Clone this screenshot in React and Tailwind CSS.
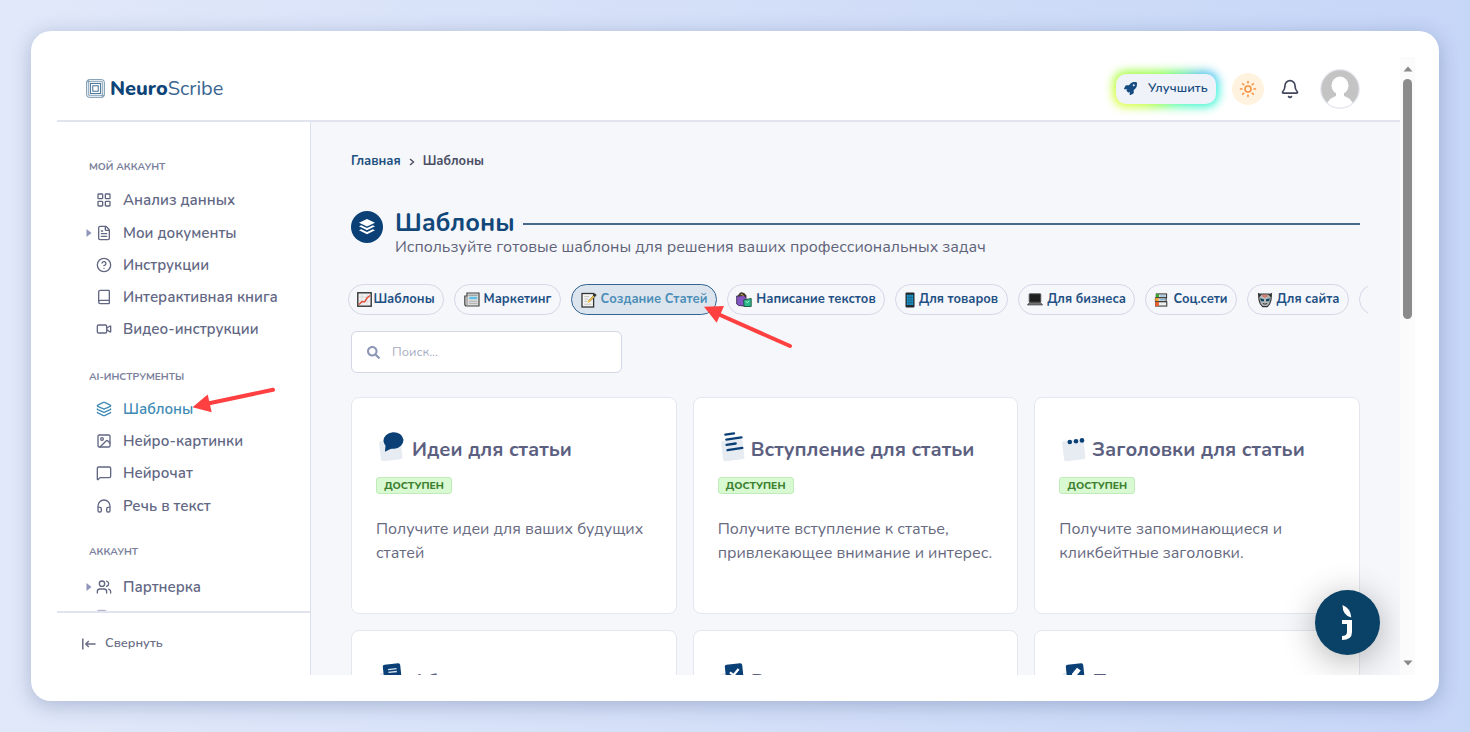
import React from "react";
import { LayoutGrid, FileText, CircleHelp, Book, Video, Layers, Image as ImageIcon, MessageSquare, Headphones, Users, Sun, Bell } from "lucide-react";
import { FaSearch, FaRocket } from "react-icons/fa";

const cap = "font-bold text-[10.2px] leading-none text-[#7b819c]";

function Caret() {
  return (
    <svg className="h-2 w-[6px]" viewBox="0 0 6 8">
      <path d="M0.5 0 L5.5 4 L0.5 8Z" fill="#8f96b8" />
    </svg>
  );
}

function NavItem({ icon: Icon, label, height, caret, active }) {
  return (
    <div className={`flex shrink-0 items-center pl-[29px] ${height} ${active ? "text-[#3f8bb5]" : "text-[#626784]"}`}>
      <div className="flex w-[10px] items-center">{caret && <Caret />}</div>
      <Icon size={16} strokeWidth={2} />
      <span className="ml-[11px] whitespace-nowrap text-[15px] font-semibold leading-5">{label}</span>
    </div>
  );
}

function Logo() {
  return (
    <svg className="h-[19px] w-[19px]" viewBox="0 0 19 19" fill="none" stroke="#7596b0" strokeWidth="0.9">
      <rect x="0.7" y="0.7" width="17.6" height="17.6" rx="2.5" stroke="#5c83a2" />
      <path d="M2.7 0.7V16.3H18.3M0.7 2.7H16.3V18.3" />
      <path d="M4.5 4.5H14.5V14.5H4.5Z" stroke="#4f7b9d" strokeWidth="1.1" />
      <rect x="6.8" y="6.8" width="5.4" height="5.4" stroke="#2f6088" fill="#fff" />
    </svg>
  );
}

const ChartIcon = () => (
  <svg className="h-[15px] w-[15px]" viewBox="0 0 15 15">
    <rect x="0.8" y="0.8" width="13.4" height="13.4" fill="#f1f1f1" stroke="#333" strokeWidth="1.4" />
    <path d="M1.5 5h12M1.5 9h12M5 1.5v12M10 1.5v12" stroke="#d0d0d0" strokeWidth="0.7" />
    <path d="M2 12.5L5 9.5L7.5 10L10 6L13 3.5" fill="none" stroke="#e2513f" strokeWidth="1.5" />
  </svg>
);
const NewsIcon = () => (
  <svg className="h-[15px] w-[16px]" viewBox="0 0 16 15">
    <path d="M3 1H15V14H2.5Q0.8 14 0.8 12V4H3Z" fill="#dcdcdc" stroke="#444" strokeWidth="1.2" />
    <path d="M3 4V13" stroke="#888" />
    <path d="M4.5 3.2H13.5" stroke="#8a8a8a" />
    <rect x="5.3" y="4.8" width="7.8" height="2.4" fill="#5bc0e6" />
    <path d="M5 9.3H13.3M5 11.4H13.3" stroke="#a8a8a8" strokeWidth="0.8" />
  </svg>
);
const MemoIcon = () => (
  <svg className="h-[16px] w-[16px]" viewBox="0 0 16 16">
    <rect x="1" y="1.5" width="11.6" height="13.5" fill="#f5f5f3" stroke="#333" strokeWidth="1.3" />
    <path d="M3.3 4.6h5M3.3 7h4M3.3 9.4h3M3.3 12.2h7" stroke="#b5b5b5" strokeWidth="0.8" />
    <path d="M7.8 9.6L14 3" stroke="#555" strokeWidth="2" />
    <path d="M7 10.4L13 4" stroke="#f3c64b" strokeWidth="1.6" />
    <path d="M12.9 4.1L14.7 2.2" stroke="#333" strokeWidth="2.6" />
  </svg>
);
const BagsIcon = () => (
  <svg className="h-[16px] w-[16px]" viewBox="0 0 16 16">
    <path d="M0.7 4L10 3.3V14.3L2.5 13.4L0.7 12Z" fill="#8655c5" stroke="#3a2c50" strokeWidth="0.9" />
    <path d="M2.6 4.6Q4 0.2 6.4 1.2Q9 1.6 9.4 4.8M4.6 4Q5.4 1 8 3.6" fill="none" stroke="#3b3426" strokeWidth="1.5" />
    <path d="M5 2.6Q6.5 1.6 7.4 4" fill="none" stroke="#d8b24a" strokeWidth="0.9" />
    <path d="M7.6 8L15.2 6.5V14.5H8Z" fill="#2bb98a" stroke="#15543f" strokeWidth="0.9" />
    <path d="M9.6 9.3Q11.5 12 13.2 8.8" fill="none" stroke="#c9f5e2" strokeWidth="0.9" />
  </svg>
);
const PhoneIcon = () => (
  <svg className="h-[16px] w-[10px]" viewBox="0 0 10 16">
    <rect x="0.5" y="0.5" width="9" height="15" rx="1" fill="#25292e" />
    <rect x="1.8" y="2.8" width="6.4" height="10.2" fill="#159bd3" />
    <path d="M3.9 3v10M6.1 3v10M1.9 5.4h6.2M1.9 8h6.2M1.9 10.6h6.2" stroke="#25506b" strokeWidth="0.6" />
  </svg>
);
const LaptopIcon = () => (
  <svg className="h-[15px] w-[16px]" viewBox="0 0 16 15">
    <rect x="2.2" y="1.8" width="11.6" height="8.4" rx="0.6" fill="#1e1e1e" stroke="#555" strokeWidth="0.9" />
    <path d="M2.4 10.6H13.6L15.6 13H0.4Z" fill="#777" stroke="#333" strokeWidth="0.6" />
  </svg>
);
const BooksIcon = () => (
  <svg className="h-[14px] w-[14px]" viewBox="0 0 14 15">
    <rect x="2" y="1" width="11" height="4" fill="#eee" stroke="#333" strokeWidth="1.1" />
    <rect x="1.5" y="1" width="3.5" height="4" fill="#3fa535" />
    <rect x="1" y="5.2" width="11.5" height="3.8" fill="#eee" stroke="#333" strokeWidth="1.1" />
    <rect x="0.8" y="5.4" width="3.5" height="3.6" fill="#f2a331" />
    <rect x="1.2" y="9.4" width="12" height="4.6" fill="#eee" stroke="#333" strokeWidth="1.1" />
    <rect x="0.8" y="9.6" width="4" height="4.4" fill="#e8622f" />
    <path d="M6 3.2H12M5.5 7.2H11.5" stroke="#4a9ed6" strokeWidth="0.9" />
  </svg>
);
const MaskIcon = () => (
  <svg className="h-[16px] w-[16px]" viewBox="0 0 16 16">
    <path d="M1.6 2.5L4.5 2H11.5L14.4 2.5L14 8L12.6 12L10.3 14.6H5.7L3.4 12L2 8Z" fill="#b4b8ba" stroke="#333" strokeWidth="1.1" strokeLinejoin="round" />
    <path d="M0.8 0.8L4.8 2.4L2 5.5ZM15.2 0.8L11.2 2.4L14 5.5Z" fill="#333" />
    <path d="M3 6.3L7 7.2V9.2H4ZM13 6.3L9 7.2V9.2H12Z" fill="#0f4860" />
    <path d="M8 2.4V5.8M6 2.8L6.4 4.8M10 2.8L9.6 4.8" stroke="#e4573d" strokeWidth="1.1" />
    <path d="M5.8 11.5Q8 12.8 10.2 11.5" fill="none" stroke="#333" />
  </svg>
);

const tabs = [
  { t: "Шаблоны", I: ChartIcon, w: "w-24", g: "gap-px" },
  { t: "Маркетинг", I: NewsIcon, w: "w-[107px]", g: "gap-1" },
  { t: "Создание Статей", I: MemoIcon, w: "w-[146px]", g: "gap-1", on: true },
  { t: "Написание текстов", I: BagsIcon, w: "w-[158px]", g: "gap-1" },
  { t: "Для товаров", I: PhoneIcon, w: "w-[113px]", g: "gap-1" },
  { t: "Для бизнеса", I: LaptopIcon, w: "w-[117px]", g: "gap-1" },
  { t: "Соц.сети", I: BooksIcon, w: "w-[92px]", g: "gap-[5px]" },
  { t: "Для сайта", I: MaskIcon, w: "w-[102px]", g: "gap-1" },
];

function CardIcon({ kind }) {
  return (
    <svg className="-mt-[5px] h-8 w-7 shrink-0" viewBox="0 0 28 32">
      <rect x="4" y="9" width="21.5" height="20.5" rx="2.5" fill="#e7ecf3" transform="rotate(-7 14 19)" />
      {kind === "comment" && (
        <g transform="rotate(-5 17 10)">
          <ellipse cx="17.5" cy="9.5" rx="10" ry="8.3" fill="#0b4076" />
          <path d="M9.5 12L8 20L16 17Z" fill="#0b4076" />
        </g>
      )}
      {kind === "lines" && (
        <g stroke="#0b4076" strokeWidth="2.3" strokeLinecap="round" transform="translate(-1 0)">
          <path d="M8.3 3.6L17 2.4M9.3 8.7L24.5 6.4M9.5 13.8L18.7 12.5M10.5 19.2L25.3 16.9" />
        </g>
      )}
      {kind === "dots" && (
        <g fill="#0b4076">
          <circle cx="10.8" cy="11" r="2.3" />
          <circle cx="17" cy="10.2" r="2.3" />
          <circle cx="23" cy="9.4" r="2.3" />
        </g>
      )}
      {(kind === "doc" || kind === "check" || kind === "pen") && (
        <g transform="rotate(-6 16 10)">
          <rect x="7.5" y="0.9" width="17.5" height="19" rx="2" fill="#0b4076" />
          {kind === "doc" && <path d="M12.5 6.2H21M12.5 9H21" stroke="#dce5ef" strokeWidth="1.3" />}
          {kind === "check" && <path d="M12 9L15.5 12L21 6.5" fill="none" stroke="#fff" strokeWidth="2.2" />}
          {kind === "pen" && <path d="M12 15L13 10.5L18.5 5L22 8L16 14Z" fill="#fff" />}
        </g>
      )}
    </svg>
  );
}

function Card({ kind, title, tight, raised, lines }) {
  return (
    <div className={`h-[217px] rounded-lg border border-[#e5e7f0] bg-white px-6 ${raised ? "pt-[30px]" : "pt-[31px]"}`}>
      <div className={`flex h-10 items-center ${tight ? "gap-[5px]" : "gap-2"}`}>
        <CardIcon kind={kind} />
        <h3 className="whitespace-nowrap pt-px text-xl font-bold leading-6 text-[#5c6080]">{title}</h3>
      </div>
      <div className="mt-2 flex h-[17px] w-[76px] items-center justify-center rounded-[3px] border border-[#c0ecb9] bg-[#d9f9d3] pt-px text-[10.4px] font-extrabold leading-none text-[#3d8030]">
        ДОСТУПЕН
      </div>
      <div className="mt-[23px]">
        {lines.map((text) => (
          <p key={text} className="whitespace-nowrap text-base leading-6 text-[#66697f]">{text}</p>
        ))}
      </div>
    </div>
  );
}

function Sidebar() {
  return (
    <aside className="flex w-[254px] shrink-0 flex-col border-r border-[#dcdfec] bg-white">
      <nav className="flex h-[489px] flex-col overflow-hidden pt-[39px]">
        <div className={`flex h-3 shrink-0 items-center pl-8 ${cap}`}>МОЙ АККАУНТ</div>
        <div className="h-[10px] shrink-0" />
        <NavItem icon={LayoutGrid} label="Анализ данных" height="h-[34px]" />
        <NavItem icon={FileText} label="Мои документы" height="h-[32px]" caret />
        <NavItem icon={CircleHelp} label="Инструкции" height="h-[32px]" />
        <NavItem icon={Book} label="Интерактивная книга" height="h-[32px]" />
        <NavItem icon={Video} label="Видео-инструкции" height="h-[32px]" />
        <div className="h-[26px] shrink-0" />
        <div className={`flex h-3 shrink-0 items-center pl-8 ${cap}`}>AI-ИНСТРУМЕНТЫ</div>
        <div className="h-[10px] shrink-0" />
        <NavItem icon={Layers} label="Шаблоны" height="h-[32px]" active />
        <NavItem icon={ImageIcon} label="Нейро-картинки" height="h-[32px]" />
        <NavItem icon={MessageSquare} label="Нейрочат" height="h-[32px]" />
        <NavItem icon={Headphones} label="Речь в текст" height="h-[33px]" />
        <div className="h-[24px] shrink-0" />
        <div className={`flex h-3 shrink-0 items-center pl-8 ${cap}`}>АККАУНТ</div>
        <div className="h-[12px] shrink-0" />
        <NavItem icon={Users} label="Партнерка" height="h-[33px]" caret />
        <FileText className="ml-[38px] mt-[6px] shrink-0 text-[#b5b9cb]" size={16} />
      </nav>
      <div className="flex h-[64px] items-center border-t-2 border-[#e1e4ee] pl-[25px] text-[#6a6e86]">
        <svg className="h-3 w-[14px]" viewBox="0 0 14 12" fill="none" stroke="#6a6e86" strokeWidth="1.5">
          <path d="M0.8 0.5V11.5M3.7 6H13.6M6.8 3L3.8 6L6.8 9" />
        </svg>
        <span className="ml-[9px] text-[12.8px] font-semibold">Свернуть</span>
      </div>
    </aside>
  );
}

export default function App() {
  return (
    <div className="relative h-[732px] w-[1470px] overflow-hidden bg-linear-to-r from-[#e1e8f9] to-[#c6d6f7] p-[31px] font-['Nunito','Open_Sans',sans-serif]">
      <div className="h-[670px] w-[1408px] rounded-[20px] bg-white p-[26px] shadow-[0_4px_20px_rgba(60,80,130,0.32)]">
        <div className="flex h-[618px] w-[1358px]">
          <div className="flex w-[1343px] flex-col">
            <header className="flex h-[65px] shrink-0 items-center border-b-2 border-[#e1e4ee] pl-[29px]">
              <Logo />
              <div className="ml-[5px] text-xl leading-none text-[#3a6691]">
                <b className="font-extrabold text-[#0d4478]">Neuro</b>Scribe
              </div>
              <div className="ml-auto flex items-center pr-10">
                <div className="relative h-[30px] w-[100px]">
                  <div className="absolute -inset-[3px] rounded-[13px] bg-[conic-gradient(from_0deg,#7dff4a,#5cf08a_52deg,#4cb8f5_72deg,#3df5e0_90deg,#3df5d0_108deg,#5cffa0_150deg,#8dff4a_210deg,#dcff3a_255deg,#c8ff3a_270deg,#9dff3a_290deg,#7dff4a)] blur-[5px]" />
                  <div className="relative flex h-full items-center rounded-[10px] bg-[#eff2f8] pl-2 text-[#154b80]">
                    <FaRocket size={13} />
                    <span className="ml-[11px] pt-px text-[12.8px] font-semibold">Улучшить</span>
                  </div>
                </div>
                <div className="ml-4 flex h-8 w-8 items-center justify-center rounded-full bg-[#fff2df] text-[#f59140]">
                  <Sun size={18} strokeWidth={2.1} />
                </div>
                <Bell className="ml-4 text-[#43475e]" size={20} strokeWidth={2} />
                <svg className="ml-5 h-10 w-10" viewBox="0 0 40 40">
                  <defs><clipPath id="av"><circle cx="20" cy="20" r="18.8" /></clipPath></defs>
                  <circle cx="20" cy="20" r="19.3" fill="#c4c4c4" stroke="#e8eaf2" strokeWidth="1.3" />
                  <g clipPath="url(#av)" fill="#fff">
                    <ellipse cx="20" cy="16.5" rx="8.5" ry="9" />
                    <rect x="16" y="21" width="8" height="8" />
                    <ellipse cx="20" cy="39.5" rx="14" ry="13" />
                  </g>
                </svg>
              </div>
            </header>
            <div className="flex h-[553px]">
              <Sidebar />
              <main className="w-[1089px] overflow-hidden bg-[#f5f7fb] pl-10">
                <div className="flex h-[78px] items-center pt-0.5 text-[12.8px] font-bold text-[#4a4e63]">
                  <span className="text-[#1d4f80]">Главная</span>
                  <svg className="mx-2 h-2 w-[6px]" viewBox="0 0 6 8"><path d="M1 1L4.5 4L1 7" fill="none" stroke="#4a4e63" strokeWidth="1.4" /></svg>
                  <span>Шаблоны</span>
                </div>
                <div className="flex h-[62px] w-[1009px] pt-[10px]">
                  <div className="mt-px flex h-8 w-8 shrink-0 items-center justify-center rounded-full bg-[#0b4076]">
                    <svg className="h-[18px] w-[18px]" viewBox="0 0 18 18" fill="#fff">
                      <path d="M9 1L17 4.7L9 8.4L1 4.7Z" />
                      <path d="M1 8.3L3.2 7.3L9 10L14.8 7.3L17 8.3L9 12.2Z" />
                      <path d="M1 12.3L3.2 11.2L9 14L14.8 11.2L17 12.3L9 16.3Z" />
                    </svg>
                  </div>
                  <div className="ml-3 flex grow flex-col">
                    <div className="flex h-[26px] items-center">
                      <h1 className="pt-px text-[25px] font-bold leading-none text-[#12477a]">Шаблоны</h1>
                      <div className="ml-2 mt-0.5 h-0.5 grow bg-[#45698d]" />
                    </div>
                    <p className="whitespace-nowrap text-base leading-[22px] text-[#5f6379]">Используйте готовые шаблоны для решения ваших профессиональных задач</p>
                  </div>
                </div>
                <div className="mt-[22px] -ml-[3px] flex w-[1020px] gap-[10px] overflow-hidden">
                  {tabs.map(({ t, I, w, g, on }) => (
                    <div key={t} className={`flex h-[31px] shrink-0 items-center justify-center rounded-full border ${w} ${g} ${on ? "border-[#336493] bg-[#dce5ed] text-[#4a8db8]" : "border-[#d3d7e6] text-[#1f5083]"}`}>
                      <I />
                      <span className="whitespace-nowrap text-[12.8px] font-bold leading-none">{t}</span>
                    </div>
                  ))}
                  <div className="h-[31px] w-24 shrink-0 rounded-full border border-[#d3d7e6]" />
                </div>
                <div className="mt-4 flex h-[42px] w-[271px] items-center rounded-md border border-[#d3d7e6] bg-white pl-[15px]">
                  <FaSearch size={13} className="text-[#8d96b5]" />
                  <span className="ml-3 pt-px text-[12.8px] text-[#a7acc2]">Поиск...</span>
                </div>
                <div className="mt-6 grid w-[1009px] grid-cols-3 gap-4">
                  <Card kind="comment" title="Идеи для статьи" lines={["Получите идеи для ваших будущих", "статей"]} />
                  <Card kind="lines" title="Вступление для статьи" tight lines={["Получите вступление к статье,", "привлекающее внимание и интерес."]} />
                  <Card kind="dots" title="Заголовки для статьи" tight lines={["Получите запоминающиеся и", "кликбейтные заголовки."]} />
                  <Card kind="doc" title="Абзац" raised lines={[]} />
                  <Card kind="check" title="Вывод" raised tight lines={[]} />
                  <Card kind="pen" title="Пост" raised tight lines={[]} />
                </div>
              </main>
            </div>
          </div>
          <div className="flex w-[15px] flex-col items-center bg-[#fbfbfb] pt-[9px]">
            <svg className="h-[6px] w-[10px]" viewBox="0 0 10 6"><path d="M0.5 5.5L5 0.5L9.5 5.5Z" fill="#8a8a8a" /></svg>
            <div className="mt-[7px] h-[240px] w-[9px] rounded-full bg-[#8b8b8b]" />
            <svg className="mb-[9px] mt-auto h-[6px] w-[10px]" viewBox="0 0 10 6"><path d="M0.5 0.5L5 5.5L9.5 0.5Z" fill="#8a8a8a" /></svg>
          </div>
        </div>
      </div>
      <div className="absolute left-[1240px] top-[520px] h-[155px] w-[160px] overflow-hidden">
        <div className="absolute left-[75px] top-[70px] h-[65px] w-[65px] rounded-full bg-[#0a4166] shadow-[0_6px_34px_rgba(0,0,0,0.3)]">
          <svg className="h-full w-full" viewBox="0 0 65 65">
            <path d="M27.5 15Q35.5 18 36.3 27.5Q27.5 25.5 27.5 15Z" fill="#fff" />
            <path d="M27 30H37V42Q37 50 27 50V46Q32 46 32 42V34H27Z" fill="#fff" />
          </svg>
        </div>
      </div>
      <svg className="pointer-events-none absolute inset-0 h-[732px] w-[1470px]" viewBox="0 0 1470 732" fill="#ff4040" stroke="#ff4040">
        <path d="M208 403.5L273 389.8" strokeWidth="4" strokeLinecap="round" />
        <path d="M192.5 407.3L207.7 394.5L211.7 412.3Z" stroke="none" />
        <path d="M719 314.5L790 346" strokeWidth="4" strokeLinecap="round" />
        <path d="M704 306.7L724 306L716.7 322.7Z" stroke="none" />
      </svg>
    </div>
  );
}
